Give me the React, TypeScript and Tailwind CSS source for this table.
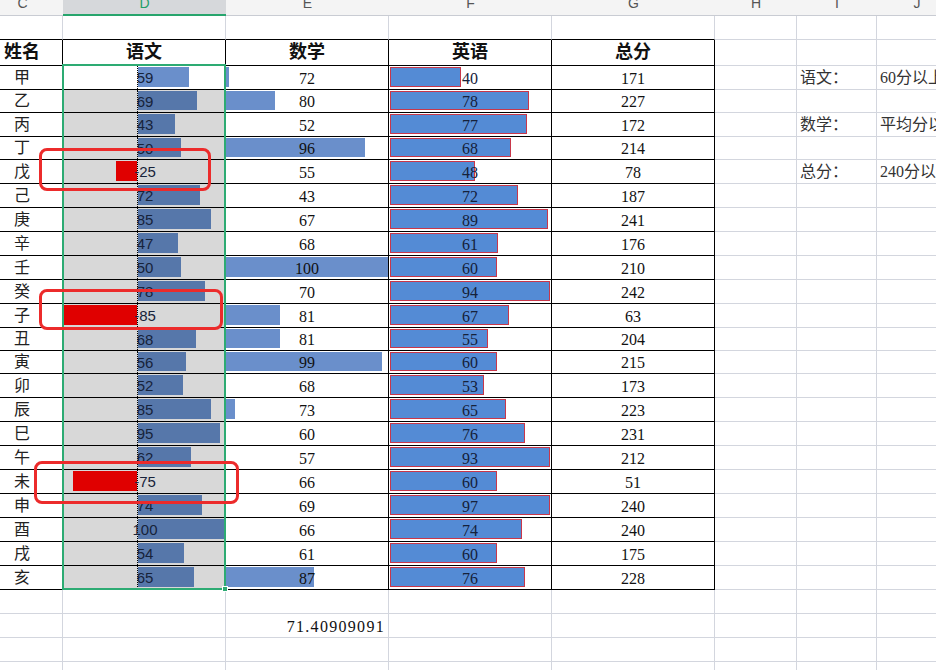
import React from "react";

const SERIF = "font-['Liberation_Serif','Noto_Sans_CJK_SC',serif]";
const SANS = "font-['Liberation_Sans','Noto_Sans_CJK_SC',sans-serif]";
const GRID = "border-[#d3d6de]";

const names = ["甲", "乙", "丙", "丁", "戊", "己", "庚", "辛", "壬", "癸", "子", "丑", "寅", "卯", "辰", "巳", "午", "未", "申", "酉", "戌", "亥"];
const chinese = [59, 69, 43, 50, -25, 72, 85, 47, 50, 78, -85, 68, 56, 52, 85, 95, 62, -75, 74, 100, 54, 65];
const math = [72, 80, 52, 96, 55, 43, 67, 68, 100, 70, 81, 81, 99, 68, 73, 60, 57, 66, 69, 66, 61, 87];
const english = [40, 78, 77, 68, 48, 72, 89, 61, 60, 94, 67, 55, 60, 53, 65, 76, 93, 60, 97, 74, 60, 76];
const total = [171, 227, 172, 214, 78, 187, 241, 176, 210, 242, 63, 204, 215, 173, 223, 231, 212, 51, 240, 240, 175, 228];
// rows that are a pixel shorter, as in the sheet
const shortRows = [1, 3, 11, 12];

const notes: Record<number, [string, string]> = {
  0: ["语文：", "60分以上"],
  2: ["数学：", "平均分以上"],
  4: ["总分：", "240分以上"],
};

const mathAvg = math.reduce((a, b) => a + b, 0) / math.length;

const letters = [
  { l: "C", w: "w-[81px]" },
  { l: "D", w: "w-[163px]", on: true },
  { l: "E", w: "w-[163px]" },
  { l: "F", w: "w-[163px]" },
  { l: "G", w: "w-[163px]" },
  { l: "H", w: "w-[82px]" },
  { l: "I", w: "w-[80px]" },
  { l: "J", w: "w-[80px]" },
];

const ColumnHeader = () => (
  <div className="flex h-[16px]">
    {letters.map((c) => (
      <div
        key={c.l}
        className={`${c.w} shrink-0 flex justify-center overflow-hidden ${SANS} ${
          c.on ? "bg-[#d6d8db] border-b-2 border-[#27a56d] text-[#1f9e68]" : "bg-[#f4f4f4] border-b border-[#c9ccd3] text-[#555]"
        }`}
      >
        <span className="-mt-[4px] text-[14px] leading-none">{c.l}</span>
      </div>
    ))}
  </div>
);

const ChineseCell = ({ v, active }: { v: number; active: boolean }) => {
  const w = Math.abs(v) * 0.86;
  return (
    <div className={`relative flex w-[163px] shrink-0 border-r border-b border-black ${active ? "bg-white" : "bg-[#d8d8d8]"}`}>
      <div className="flex w-[74px] justify-end pt-[1px] pb-[2px]">
        {v < 0 && <div className="h-full bg-[#e00000]" style={{ width: w }} />}
      </div>
      <div className="flex-1 border-l border-dotted border-black pt-[1px] pb-[2px]">
        {v > 0 && <div className={`h-full ${active ? "bg-[#6a8fcb]" : "bg-[#5677aa]"}`} style={{ width: w }} />}
      </div>
      <span className={`absolute inset-0 flex items-center justify-center pl-[2px] pt-[2px] text-[15px] text-[#17233a] ${SANS}`}>{v}</span>
    </div>
  );
};

const MathCell = ({ v }: { v: number }) => {
  const w = (Math.max(0, v - mathAvg) / (100 - mathAvg)) * 162;
  return (
    <div className="relative w-[163px] shrink-0 border-r border-b border-black pt-[1px] pb-[2px]">
      {w > 0 && <div className="h-full bg-[#6a8fcb]" style={{ width: w }} />}
      <span className="absolute inset-0 flex items-center justify-center pt-[2px] text-[16px] text-[#111]">{v}</span>
    </div>
  );
};

const EnglishCell = ({ v }: { v: number }) => {
  const w = (Math.min(v, 90) / 90) * 160;
  return (
    <div className="relative w-[163px] shrink-0 border-r border-b border-black pt-[1px] pb-[2px] pl-[1px]">
      <div className="h-full border border-[#c8374a] bg-[#548bd5]" style={{ width: w }} />
      <span className="absolute inset-0 flex items-center justify-center pt-[2px] text-[16px] text-[#15213a]">{v}</span>
    </div>
  );
};

export default function App() {
  return (
    <div className={`relative w-[936px] h-[670px] overflow-hidden bg-white ${SERIF}`}>
      <div className="-ml-[18px]">
        <ColumnHeader />

        {/* empty first row, bottom edge is the table's top border */}
        <div className="flex h-[24px]">
          <div className={`w-[81px] shrink-0 border-r border-b ${GRID} border-b-black`} />
          <div className={`w-[163px] shrink-0 border-r border-b ${GRID} border-b-black`} />
          <div className={`w-[163px] shrink-0 border-r border-b ${GRID} border-b-black`} />
          <div className={`w-[163px] shrink-0 border-r border-b ${GRID} border-b-black`} />
          <div className={`w-[163px] shrink-0 border-r border-b ${GRID} border-b-black`} />
          <div className={`w-[82px] shrink-0 border-r border-b ${GRID}`} />
          <div className={`w-[80px] shrink-0 border-r border-b ${GRID}`} />
          <div className={`w-[80px] shrink-0 border-r border-b ${GRID}`} />
        </div>

        {/* table header */}
        <div className="flex h-[26px] text-[18px] font-bold text-[#111]">
          {["姓名", "语文", "数学", "英语"].map((t, i) => (
            <div key={t} className={`${i === 0 ? "w-[81px]" : "w-[163px]"} shrink-0 flex items-center justify-center border-r border-b border-black`}>
              {t}
            </div>
          ))}
          <div className="w-[163px] shrink-0 flex items-center justify-center border-r border-b border-black">总分</div>
          <div className={`w-[82px] shrink-0 border-r border-b ${GRID}`} />
          <div className={`w-[80px] shrink-0 border-r border-b ${GRID}`} />
          <div className={`w-[80px] shrink-0 border-r border-b ${GRID}`} />
        </div>

        {names.map((n, i) => (
          <div key={n + i} className={`flex ${shortRows.includes(i) ? "h-[23px]" : "h-[24px]"}`}>
            <div className="w-[81px] shrink-0 flex items-center justify-center border-r border-b border-black text-[16px] text-[#222]">{n}</div>
            <ChineseCell v={chinese[i]} active={i === 0} />
            <MathCell v={math[i]} />
            <EnglishCell v={english[i]} />
            <div className="w-[163px] shrink-0 flex items-center justify-center pt-[2px] border-r border-b border-black text-[16px] text-[#111]">{total[i]}</div>
            <div className={`w-[82px] shrink-0 border-r border-b ${GRID}`} />
            <div className={`w-[80px] shrink-0 flex items-center pl-[3px] pt-[1px] border-r border-b ${GRID} text-[16px] text-[#333]`}>
              {notes[i]?.[0]}
            </div>
            <div className={`w-[80px] shrink-0 flex items-center pl-[3px] pt-[1px] whitespace-nowrap border-r border-b ${GRID} text-[16px] text-[#333]`}>
              {notes[i]?.[1]}
            </div>
          </div>
        ))}

        {[0, 1, 2, 3].map((r) => (
          <div key={r} className="flex h-[24px]">
            <div className={`w-[81px] shrink-0 border-r border-b ${GRID}`} />
            <div className={`w-[163px] shrink-0 border-r border-b ${GRID}`} />
            <div className={`w-[163px] shrink-0 flex items-center justify-end pr-[3px] pt-[2px] border-r border-b ${GRID} text-[16px] tracking-[1.3px] text-[#111]`}>
              {r === 1 ? "71.40909091" : ""}
            </div>
            <div className={`w-[163px] shrink-0 border-r border-b ${GRID}`} />
            <div className={`w-[163px] shrink-0 border-r border-b ${GRID}`} />
            <div className={`w-[82px] shrink-0 border-r border-b ${GRID}`} />
            <div className={`w-[80px] shrink-0 border-r border-b ${GRID}`} />
            <div className={`w-[80px] shrink-0 border-r border-b ${GRID}`} />
          </div>
        ))}
      </div>

      {/* selection around the 语文 column */}
      <div className="absolute left-[62px] top-[64px] w-[164px] h-[526px] border-2 border-[#2dab73]" />
      <div className="absolute left-[222px] top-[586px] w-[6px] h-[6px] bg-[#2dab73] border border-white" />

      {/* red annotation boxes */}
      <div className="absolute left-[39px] top-[148px] w-[172px] h-[43px] rounded-[8px] border-[3px] border-[#ec2b2b]" />
      <div className="absolute left-[39px] top-[289px] w-[184px] h-[41px] rounded-[8px] border-[3px] border-[#ec2b2b]" />
      <div className="absolute left-[34px] top-[461px] w-[205px] h-[43px] rounded-[8px] border-[3px] border-[#ec2b2b]" />
    </div>
  );
}
